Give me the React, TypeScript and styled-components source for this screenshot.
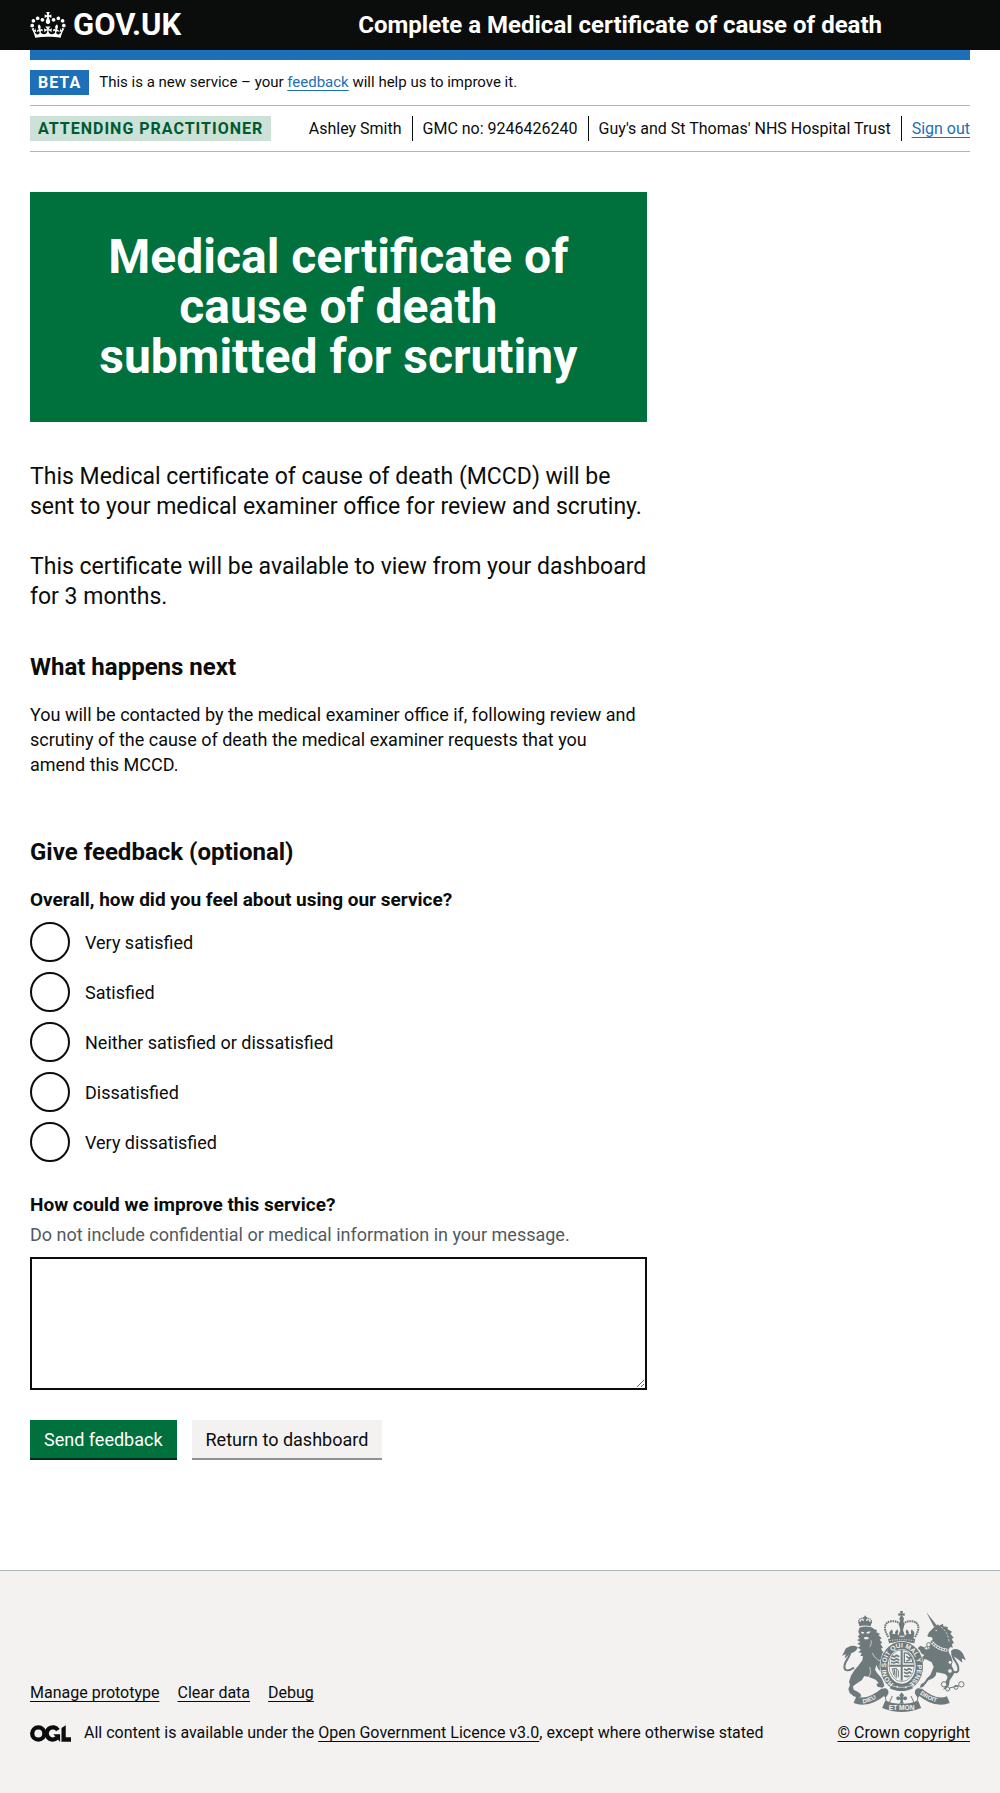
import React, { useState } from 'react';
import styled, { createGlobalStyle, css } from 'styled-components';

const colour = {
  text: '#0b0c0c',
  secondary: '#505a5f',
  link: '#1d70b8',
  brand: '#1d70b8',
  border: '#b1b4b6',
  green: '#00703c',
  greenShadow: '#002d18',
  grey: '#f3f2f1',
  greyShadow: '#929191',
  crest: '#6e797b',
};

const GlobalStyle = createGlobalStyle`
  *, *::before, *::after { box-sizing: border-box; }
  body {
    margin: 0;
    background: ${colour.grey};
    color: ${colour.text};
    font-family: Roboto, "Liberation Sans", sans-serif;
    font-size: 18px;
    line-height: 25px;
    -webkit-font-smoothing: antialiased;
  }
`;

const Page = styled.div`
  background: #fff;
`;

const Container = styled.div`
  max-width: 960px;
  margin: 0 30px;
  @media (min-width: 1020px) {
    margin: 0 auto;
  }
`;

const linkLine = css`
  text-decoration: underline;
  text-decoration-thickness: 1px;
  text-decoration-skip-ink: none;
  text-underline-offset: 3px;
`;

const Link = styled.a<{ $muted?: boolean }>`
  color: ${(p) => (p.$muted ? colour.text : colour.link)};
  ${linkLine}
`;

/* Header */

const HeaderBar = styled.header`
  background: ${colour.text};
  color: #fff;
`;

const HeaderInner = styled(Container)`
  display: grid;
  grid-template-columns: 1fr 2fr;
  align-items: center;
  padding: 10px 0;
`;

const LogoLink = styled.a`
  display: flex;
  align-items: center;
  gap: 7px;
  color: #fff;
  font-size: 31px;
  font-weight: 700;
  line-height: 30px;
  text-decoration: none;
`;

const ServiceName = styled.a`
  padding-left: 15px;
  color: #fff;
  font-size: 24px;
  font-weight: 700;
  line-height: 30px;
  text-decoration: none;
`;

const BrandLine = styled.div`
  height: 10px;
  background: ${colour.brand};
`;

/* Banners under the header */

const Banner = styled.div`
  display: flex;
  align-items: center;
  padding: 10px 0;
  border-bottom: 1px solid ${colour.border};
  font-size: 16px;
`;

const PhaseText = styled.p`
  margin: 0 0 0 10px;
  font-size: 15px;
`;

const Tag = styled.strong<{ $tone: 'blue' | 'green' }>`
  padding: 0 8px;
  font-weight: 700;
  letter-spacing: 1px;
  text-transform: uppercase;
  ${(p) =>
    p.$tone === 'blue'
      ? css`
          background: ${colour.brand};
          color: #fff;
        `
      : css`
          background: #cce2d8;
          color: #005a30;
        `}
`;

const UserList = styled.ul`
  display: flex;
  margin: 0 0 0 auto;
  padding: 0;
  list-style: none;
`;

const UserItem = styled.li`
  padding: 0 10px;
  border-right: 1px solid ${colour.text};
  &:last-child {
    padding-right: 0;
    border-right: 0;
  }
`;

/* Main content */

const Main = styled.main`
  width: calc(66.6667% - 10px);
  padding: 40px 0 112px;
`;

const Panel = styled.div`
  padding: 40px;
  background: ${colour.green};
  color: #fff;
  text-align: center;
`;

const PanelTitle = styled.h1`
  margin: 0;
  font-size: 48px;
  line-height: 50px;
`;

const Lead = styled.div`
  margin: 40px 0;
  font-size: 23px;
  line-height: 30px;
  p {
    margin: 0 0 30px;
  }
`;

const Heading = styled.h2`
  margin: 0 0 20px;
  font-size: 24px;
  line-height: 30px;
`;

const Body = styled.p`
  margin: 0 0 60px;
  padding-right: 10px;
`;

const Fieldset = styled.fieldset`
  min-width: 0;
  margin: 0 0 30px;
  padding: 0;
  border: 0;
`;

const Legend = styled.legend`
  margin: 0 0 10px;
  padding: 0;
  font-size: 19px;
  font-weight: 700;
`;

const RadioGroup = styled.div`
  display: grid;
  gap: 10px;
`;

const RadioLabel = styled.label`
  display: flex;
  align-items: center;
  gap: 15px;
  width: fit-content;
  cursor: pointer;
`;

const RadioInput = styled.input`
  appearance: none;
  width: 40px;
  height: 40px;
  margin: 0;
  border: 2px solid ${colour.text};
  border-radius: 50%;
  background: #fff;
  cursor: pointer;
  &:checked {
    background: radial-gradient(${colour.text} 0 10px, #fff 11px);
  }
  &:focus {
    outline: 3px solid #fd0;
  }
`;

const FieldLabel = styled.label`
  display: block;
  margin-bottom: 5px;
  font-size: 19px;
  font-weight: 700;
`;

const Hint = styled.div`
  margin-bottom: 10px;
  color: ${colour.secondary};
`;

const TextArea = styled.textarea`
  display: block;
  width: 100%;
  padding: 2px 5px;
  border: 2px solid ${colour.text};
  border-radius: 0;
  background: #fff;
  color: inherit;
  font: inherit;
  resize: vertical;
`;

const ButtonGroup = styled.div`
  display: flex;
  gap: 15px;
  margin-top: 30px;
`;

const Button = styled.button<{ $secondary?: boolean }>`
  padding: 7px 14px 6px;
  border: 0;
  background: ${(p) => (p.$secondary ? colour.grey : colour.green)};
  box-shadow: 0 2px 0 ${(p) => (p.$secondary ? colour.greyShadow : colour.greenShadow)};
  color: ${(p) => (p.$secondary ? colour.text : '#fff')};
  font: inherit;
  cursor: pointer;
`;

/* Footer */

const Footer = styled.footer`
  padding: 40px 0 50px;
  border-top: 1px solid ${colour.border};
  background: ${colour.grey};
  font-size: 16px;
  line-height: 20px;
`;

const FooterInner = styled(Container)`
  display: flex;
  align-items: flex-end;
  justify-content: space-between;
`;

const FooterLinks = styled.ul`
  display: flex;
  gap: 18px;
  margin: 0 0 20px;
  padding: 0;
  list-style: none;
`;

const Licence = styled.div`
  display: flex;
  align-items: center;
  gap: 13px;
`;

const Copyright = styled.a`
  display: flex;
  flex-direction: column;
  align-items: center;
  gap: 10px;
  color: ${colour.text};
  ${linkLine}
`;

const CrestText = styled.text`
  fill: ${colour.grey};
  font-family: "Liberation Sans", sans-serif;
  font-weight: 700;
  text-decoration: none;
`;

function Crown() {
  return (
    <svg width="36" height="26" viewBox="0 0 132 97" fill="currentColor" aria-hidden="true">
      <path d="M25 30.2c3.5 1.5 7.7-.2 9.1-3.7 1.5-3.6-.2-7.8-3.9-9.2-3.6-1.4-7.6.3-9.1 3.9-1.4 3.5.3 7.5 3.9 9zM9 39.5c3.6 1.5 7.8-.2 9.2-3.7 1.5-3.6-.2-7.8-3.9-9.1-3.6-1.5-7.6.2-9.1 3.8-1.4 3.5.3 7.5 3.8 9zM4.4 57.2c3.5 1.5 7.7-.2 9.1-3.8 1.5-3.6-.2-7.7-3.9-9.1-3.5-1.5-7.6.3-9.1 3.8-1.4 3.5.3 7.6 3.9 9.1zm38.3-21.4c3.5 1.5 7.7-.2 9.1-3.8 1.5-3.6-.2-7.7-3.9-9.1-3.6-1.5-7.6.3-9.1 3.8-1.3 3.6.4 7.7 3.9 9.1zm64.4-5.6c-3.6 1.5-7.8-.2-9.1-3.7-1.5-3.6.2-7.8 3.8-9.2 3.6-1.4 7.7.3 9.2 3.9 1.3 3.5-.4 7.5-3.9 9zm15.9 9.3c-3.6 1.5-7.7-.2-9.1-3.7-1.5-3.6.2-7.8 3.7-9.1 3.6-1.5 7.7.2 9.2 3.8 1.5 3.5-.3 7.5-3.8 9zm4.7 17.7c-3.6 1.5-7.8-.2-9.2-3.8-1.5-3.6.2-7.7 3.9-9.1 3.6-1.5 7.7.3 9.2 3.8 1.3 3.5-.4 7.6-3.9 9.1zM89.3 35.8c-3.6 1.5-7.8-.2-9.2-3.8-1.4-3.6.2-7.7 3.9-9.1 3.6-1.5 7.7.3 9.2 3.8 1.4 3.6-.3 7.7-3.9 9.1zM69.7 17.7l8.9 4.7V9.3l-8.9 2.8c-.2-.3-.5-.6-.9-.9L72.4 0H59.6l3.5 11.2c-.3.3-.6.5-.9.9l-8.8-2.8v13.1l8.8-4.7c.3.3.6.7.9.9l-5 15.4v.1c-.2.8-.4 1.6-.4 2.4 0 4.1 3.1 7.5 7 8.1h.2c.3 0 .7.1 1 .1.4 0 .7 0 1-.1h.2c4-.6 7.1-4.1 7.1-8.1 0-.8-.1-1.7-.4-2.4V34l-5.1-15.4c.4-.2.7-.6 1-.9zM66 92.8c16.9 0 32.8 1.1 47.1 3.2 4-16.9 8.9-26.7 14-33.5l-9.6-3.4c1 4.9 1.1 7.2 0 10.2-1.5-1.4-3-4.3-4.2-8.7L108.6 76c2.8-2 5-3.2 7.5-3.3-4.4 9.4-10 11.9-13.6 11.2-4.3-.8-6.3-4.6-5.6-7.9 1-4.7 5.7-5.9 8-.5 4.3-8.7-3-11.4-7.6-8.8 7.1-7.2 7.9-13.5 2.1-21.1-8 6.1-8.1 12.3-4.5 20.8-4.7-5.4-12.1-2.5-9.5 6.2 3.4-5.2 7.9-2 7.2 3.1-.6 4.3-6.4 7.8-13.5 7.2-10.3-.9-10.9-8-11.2-13.8 2.5-.5 7.1 1.8 11 7.3L80.2 60c-4.1 4.4-8 5.3-12.3 5.4 1.4-4.4 8-11.6 8-11.6H55.5s6.4 7.2 7.9 11.6c-4.2-.1-8-1-12.3-5.4l1.4 16.4c3.9-5.5 8.5-7.7 10.9-7.3-.3 5.8-.9 12.8-11.1 13.8-7.2.6-12.9-2.9-13.5-7.2-.7-5 3.8-8.3 7.1-3.1 2.7-8.7-4.6-11.6-9.4-6.2 3.7-8.5 3.6-14.7-4.6-20.8-5.8 7.6-5 13.9 2.2 21.1-4.7-2.6-11.9.1-7.7 8.8 2.3-5.5 7.1-4.2 8.1.5.7 3.3-1.3 7.1-5.7 7.9-3.5.7-9-1.8-13.5-11.2 2.5.1 4.7 1.3 7.5 3.3l-4.7-15.4c-1.2 4.4-2.7 7.2-4.3 8.7-1.1-3-.9-5.3 0-10.2l-9.5 3.4c5 6.9 9.9 16.7 14 33.5 14.8-2.1 30.8-3.2 47.7-3.2z" />
    </svg>
  );
}

/* Open Government Licence mark: a ring, an open ring and a corner. */
function LicenceMark() {
  return (
    <svg width="41" height="17" viewBox="0 0 483 196" fill="none" stroke={colour.text} strokeWidth="51" role="img" aria-label="Open Government Licence">
      <circle cx="98" cy="98" r="72" />
      <path d="M329 59a72 72 0 1 0 -10 90" />
      <path d="M275 106h80v88h-3l-77-88z" fill={colour.text} stroke="none" />
      <path d="M371 32L421 0V143H483V194H371z" fill={colour.text} stroke="none" />
    </svg>
  );
}

function Crest() {
  return (
    <svg width="125" height="102" viewBox="66 62 375 306" fill={colour.crest} stroke="none" aria-hidden="true">
      {/* royal crown */}
      <path d="M243 62h9l-2 8 7-2v9l-7-2 2 8a5 5 0 0 1-9 0l2-8-7 2v-9l7 2z" />
      <circle cx="248" cy="86" r="7" />
      <path d="M243 91h10l3 12-4 17 6 16h-20l6-16-4-17z" />
      <g fill="none" stroke={colour.crest} strokeWidth="6" strokeDasharray="5 2">
        <path d="M208 140C190 112 198 95 216 93C232 91 240 96 247 107" />
        <path d="M288 140C306 112 298 95 280 93C264 91 256 96 249 107" />
      </g>
      <path d="M212 134c-4-12 4-10 6-17 5 5 4 9 2 14h9c-3-8 4-9 5-15 5 6 5 10 1 15l8 8h12l8-8c-4-5-4-9 1-15 1 6 8 7 5 15h8c-2-5-3-9 2-14 2 7 10 5 6 17l-2 13c-25-6-44-6-69 0z" />
      <path d="M207 146c26-6 56-6 82 0l-3 13c-24-5-52-5-76 0z" />
      <path d="M212 151c24-4 48-4 72 0" stroke={colour.grey} strokeWidth="2" fill="none" strokeDasharray="4 3" />

      {/* lion */}
      <path d="M118 91l3 17c10-3 24-3 34 0l4-17-7 4-4-7-5 5-5-9-5 9-5-5-4 7z" />
      <path d="M136 76h5v4h4v4h-4v5h-5v-5h-4v-4h4z" />
      <g fill="none" stroke={colour.crest} strokeWidth="4" strokeDasharray="4 2">
        <path d="M121 99c-6-14 8-18 16-12M156 99c6-14-10-18-18-12" />
      </g>
      <path d="M121 112C132 108 147 108 158 111L166 117 174 119 172 126 184 131 178 134 188 144 182 148 190 158 184 160 192 172 186 175 194 188 188 191 196 204 190 206 198 222 204 236 202 250 190 250 178 236 172 224 168 238 176 250C184 258 190 266 193 276L196 287 190 292 176 289 172 282 179 278 170 268 152 261 136 257 128 270 112 280 102 288 104 298 116 304 124 310 127 318 118 322 104 318 92 308 88 296 93 284 90 274 96 256 106 240 118 226 130 210 132 198 124 196 128 188 118 186 126 178 116 172 125 166 115 160 124 155 114 149 122 145 116 138 122 134 118 124Z" />
      <path d="M125 124l9 1 2 4-7 1zM143 125l12-2-4 6-8 1zM134 142l8-3 8 3-3 5h-10z" fill={colour.grey} />
      <g fill="none" stroke={colour.grey} strokeWidth="2">
        <path d="M160 188c6 12 12 20 24 24M146 262c10-8 10-20 6-32M156 150c2 8 0 14-4 20" />
      </g>
      <path d="M105 232c-20 14-32 9-28-9 4-16 22-30 16-43-2-7-9-7-12-1" fill="none" stroke={colour.crest} strokeWidth="6" />
      <path d="M116 170c-15-7-26-4-38 9l-9 18 11-6-3 14 17-16c12-3 20-8 22-19z" />

      {/* unicorn */}
      <g transform="translate(54 48)">
        <path d="M268 18L299 57 291 62Z" />
        <path d="M294 60L303 54 306 58 318 52 319 60 333 62 331 68 345 76 340 82 350 94 344 98 351 110 345 113 347 124 340 122 334 130 336 140 342 150 346 162 344 178 350 190 352 200 345 212 338 222 336 236 330 246 318 250 326 238 326 226 332 212 326 204 312 200 298 198 296 208 288 216 274 222 266 232 258 242 248 244 252 234 262 228 270 216 280 206 286 192 290 182 284 168 270 160 262 158 258 168 252 164 256 152 262 146 254 142 248 132 242 126 250 118 260 122 270 130 278 126 276 116 282 104 288 98 283 92 275 92 271 88 276 78 286 68Z" />
        <path d="M293 73l8-3-3 5z" fill={colour.grey} />
        <path d="M283 106c12 14 28 24 48 26" fill="none" stroke={colour.grey} strokeWidth="9" />
        <path d="M283 106c12 14 28 24 48 26" fill="none" stroke={colour.crest} strokeWidth="5" strokeDasharray="5 3" />
        <path d="M312 62c14 10 22 24 24 44" fill="none" stroke={colour.grey} strokeWidth="2" strokeDasharray="7 4" />
      </g>
      <path d="M394 240c20 12 27 5 23-12-4-16-22-26-16-43" fill="none" stroke={colour.crest} strokeWidth="6" />
      <path d="M396 183c5-9 16-9 26-3 11 7 12 17 19 30l-13-6 2 13-15-12c-11-5-18-11-19-22z" />
      <g fill={colour.grey} stroke={colour.crest} strokeWidth="3">
        <circle cx="393" cy="216" r="6" />
        <circle cx="393" cy="242" r="7" />
        <circle cx="375" cy="282" r="8" />
        <circle cx="386" cy="296" r="6" />
        <circle cx="411" cy="291" r="6" />
        <circle cx="427" cy="282" r="8" />
        <circle cx="329" cy="163" r="6" />
        <circle cx="322" cy="174" r="5" />
      </g>
      <path d="M392 293l28-7" stroke={colour.crest} strokeWidth="3" />

      {/* garter and shield */}
      <ellipse cx="248" cy="228" rx="66" ry="76" fill={colour.grey} />
      <ellipse cx="248" cy="228" rx="53" ry="63" fill="none" stroke={colour.crest} strokeWidth="22" />
      <path id="garter" d="M226 281A47 58 0 1 1 270 281" fill="none" />
      <CrestText fontSize="20">
        <textPath href="#garter" startOffset="2">HONI SOIT QUI MAL Y PENSE</textPath>
      </CrestText>
      <ellipse cx="248" cy="226" rx="38" ry="48" fill={colour.grey} stroke={colour.crest} strokeWidth="2" />
      <path d="M245 179h6v92h-6zM211 223h74v6h-74z" />
      <g fill="none" stroke={colour.crest} strokeWidth="5">
        <path d="M218 196l8 4 6-5 9 4M216 206l9 4 7-5 9 5M216 216l9 2 8-3 8 3" />
        <path d="M255 236l8 4 6-5 10 4M255 246l9 4 7-5 6 5M255 257l9 2 8-3" />
        <path d="M256 188c10-2 23 8 26 29h-26zM262 197l6 6 6-2-2 8-10 3" strokeWidth="4" />
        <path d="M218 236l14-2 6 7v20M221 236l3 18 10 10M226 237l2 17M232 237v22" strokeWidth="3" />
      </g>
      <path d="M222 281c16 8 34 8 50 0l10 13c-22 11-48 11-70 0z" />
      <path d="M230 289l6-3 2 7zM258 288l6 2-4 5z" fill={colour.grey} />
      <path d="M210 282c24 12 52 12 76 0" fill="none" stroke={colour.grey} strokeWidth="2" />

      {/* motto ribbon */}
      <path d="M201 312c-4 14 0 24 10 25l9-20M295 312c4 14 0 24-10 25l-9-20" fill={colour.grey} stroke={colour.crest} strokeWidth="3" />
      <g fill="none" stroke={colour.crest} strokeWidth="22">
        <path d="M108 328Q146 344 195 303" />
        <path d="M388 328Q350 344 301 303" />
        <path d="M194 342Q248 364 302 342" strokeWidth="24" />
      </g>
      <path d="M188 296c14-7 22 2 20 14l-8 12-9-8z" />
      <path d="M308 296c-14-7-22 2-20 14l8 12 9-8z" />
      <path d="M248 306l7 9-4 8c8-8 16-4 12 5l-7 2-2-4-3 6 4 8h-14l4-8-3-6-2 4-7-2c-4-9 4-13 12-5l-4-8z" />
      <path id="motto-left" d="M132 339Q158 336 196 309" fill="none" />
      <path id="motto-right" d="M302 311Q338 338 374 338" fill="none" />
      <CrestText fontSize="18">
        <textPath href="#motto-left">DIEU</textPath>
      </CrestText>
      <CrestText fontSize="18">
        <textPath href="#motto-right">DROIT</textPath>
      </CrestText>
      <CrestText fontSize="20" x="248" y="360" textAnchor="middle">ET MON</CrestText>
    </svg>
  );
}

const ratings = [
  'Very satisfied',
  'Satisfied',
  'Neither satisfied or dissatisfied',
  'Dissatisfied',
  'Very dissatisfied',
];

const footerLinks = ['Manage prototype', 'Clear data', 'Debug'];

export default function App() {
  const [rating, setRating] = useState('');
  const [comment, setComment] = useState('');

  return (
    <>
      <GlobalStyle />
      <Page>
        <HeaderBar>
          <HeaderInner>
            <LogoLink href="#">
              <Crown />
              GOV.UK
            </LogoLink>
            <ServiceName href="#">Complete a Medical certificate of cause of death</ServiceName>
          </HeaderInner>
        </HeaderBar>

        <Container>
          <BrandLine />
          <Banner>
            <Tag $tone="blue">Beta</Tag>
            <PhaseText>
              This is a new service – your <Link href="#">feedback</Link> will help us to improve it.
            </PhaseText>
          </Banner>
          <Banner>
            <Tag $tone="green">Attending practitioner</Tag>
            <UserList>
              <UserItem>Ashley Smith</UserItem>
              <UserItem>GMC no: 9246426240</UserItem>
              <UserItem>Guy's and St Thomas' NHS Hospital Trust</UserItem>
              <UserItem>
                <Link href="#">Sign out</Link>
              </UserItem>
            </UserList>
          </Banner>

          <Main>
            <Panel>
              <PanelTitle>Medical certificate of cause of death submitted for scrutiny</PanelTitle>
            </Panel>
            <Lead>
              <p>
                This Medical certificate of cause of death (MCCD) will be sent to your medical
                examiner office for review and scrutiny.
              </p>
              <p>This certificate will be available to view from your dashboard for 3 months.</p>
            </Lead>

            <Heading>What happens next</Heading>
            <Body>
              You will be contacted by the medical examiner office if, following review and scrutiny
              of the cause of death the medical examiner requests that you amend this MCCD.
            </Body>

            <Heading>Give feedback (optional)</Heading>
            <form onSubmit={(e) => e.preventDefault()}>
              <Fieldset>
                <Legend>Overall, how did you feel about using our service?</Legend>
                <RadioGroup>
                  {ratings.map((label) => (
                    <RadioLabel key={label}>
                      <RadioInput
                        type="radio"
                        name="rating"
                        value={label}
                        checked={rating === label}
                        onChange={() => setRating(label)}
                      />
                      {label}
                    </RadioLabel>
                  ))}
                </RadioGroup>
              </Fieldset>

              <FieldLabel htmlFor="improve">How could we improve this service?</FieldLabel>
              <Hint id="improve-hint">
                Do not include confidential or medical information in your message.
              </Hint>
              <TextArea
                id="improve"
                rows={5}
                aria-describedby="improve-hint"
                value={comment}
                onChange={(e) => setComment(e.target.value)}
              />

              <ButtonGroup>
                <Button type="submit">Send feedback</Button>
                <Button type="button" $secondary>
                  Return to dashboard
                </Button>
              </ButtonGroup>
            </form>
          </Main>
        </Container>
      </Page>

      <Footer>
        <FooterInner>
          <div>
            <FooterLinks>
              {footerLinks.map((label) => (
                <li key={label}>
                  <Link href="#" $muted>
                    {label}
                  </Link>
                </li>
              ))}
            </FooterLinks>
            <Licence>
              <LicenceMark />
              <span>
                All content is available under the{' '}
                <Link href="#" $muted>
                  Open Government Licence v3.0
                </Link>
                , except where otherwise stated
              </span>
            </Licence>
          </div>
          <Copyright href="#">
            <Crest />
            <span>© Crown copyright</span>
          </Copyright>
        </FooterInner>
      </Footer>
    </>
  );
}
